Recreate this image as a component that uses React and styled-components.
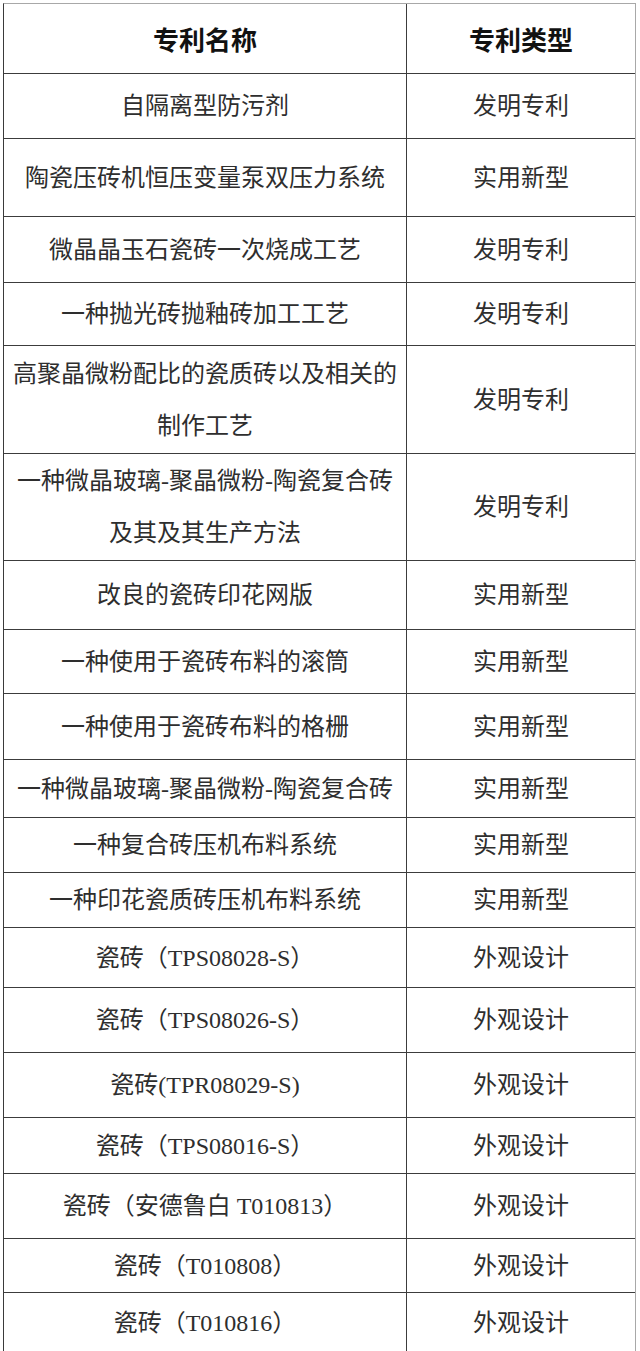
import React from "react";
import styled, { createGlobalStyle } from "styled-components";

const GlobalStyle = createGlobalStyle`
  html, body {
    margin: 0;
    padding: 0;
    background: #ffffff;
  }
  body {
    font-family: "Liberation Serif", "Noto Sans CJK SC", serif;
  }
`;

const Page = styled.div`
  padding: 3px 0 0 3px;
  width: 640px;
  box-sizing: border-box;
`;

const Table = styled.div`
  display: flex;
  flex-direction: column;
  width: 633px;
  box-sizing: border-box;
  border-top: 1px solid #a8a8a8;
  border-left: 1px solid #3a3a3a;
  border-right: 1px solid #a8a8a8;
`;

const Row = styled.div`
  display: grid;
  grid-template-columns: 403px 228px;
  height: ${(p) => p.$h}px;
  box-sizing: border-box;
  border-bottom: 1px solid #3c3c3c;
`;

const Cell = styled.div`
  display: flex;
  flex-direction: column;
  align-items: center;
  justify-content: center;
  text-align: center;
  box-sizing: border-box;
  border-right: ${(p) => (p.$divider ? "1px solid #3c3c3c" : "none")};
  font-family: ${(p) =>
    p.$head
      ? '"Noto Sans CJK SC", "Liberation Sans", sans-serif'
      : '"Liberation Serif", "Noto Sans CJK SC", serif'};
  font-size: ${(p) => (p.$head ? "26px" : "24px")};
  font-weight: ${(p) => (p.$head ? 700 : 400)};
  color: ${(p) => (p.$head ? "#111111" : "#2e2e2e")};
  line-height: 52px;
  white-space: nowrap;
`;

const Line = styled.span`
  display: block;
  height: 52px;
`;

const rows = [
  { h: 65, name: ["自隔离型防污剂"], type: "发明专利" },
  { h: 78, name: ["陶瓷压砖机恒压变量泵双压力系统"], type: "实用新型" },
  { h: 66, name: ["微晶晶玉石瓷砖一次烧成工艺"], type: "发明专利" },
  { h: 63, name: ["一种抛光砖抛釉砖加工工艺"], type: "发明专利" },
  { h: 108, name: ["高聚晶微粉配比的瓷质砖以及相关的", "制作工艺"], type: "发明专利" },
  { h: 107, name: ["一种微晶玻璃-聚晶微粉-陶瓷复合砖", "及其及其生产方法"], type: "发明专利" },
  { h: 69, name: ["改良的瓷砖印花网版"], type: "实用新型" },
  { h: 64, name: ["一种使用于瓷砖布料的滚筒"], type: "实用新型" },
  { h: 66, name: ["一种使用于瓷砖布料的格栅"], type: "实用新型" },
  { h: 58, name: ["一种微晶玻璃-聚晶微粉-陶瓷复合砖"], type: "实用新型" },
  { h: 55, name: ["一种复合砖压机布料系统"], type: "实用新型" },
  { h: 55, name: ["一种印花瓷质砖压机布料系统"], type: "实用新型" },
  { h: 60, name: ["瓷砖（TPS08028-S）"], type: "外观设计" },
  { h: 65, name: ["瓷砖（TPS08026-S）"], type: "外观设计" },
  { h: 65, name: ["瓷砖(TPR08029-S)"], type: "外观设计" },
  { h: 56, name: ["瓷砖（TPS08016-S）"], type: "外观设计" },
  { h: 65, name: ["瓷砖（安德鲁白 T010813）"], type: "外观设计" },
  { h: 54, name: ["瓷砖（T010808）"], type: "外观设计" },
  { h: 60, name: ["瓷砖（T010816）"], type: "外观设计" },
];

export default function App() {
  return (
    <>
      <GlobalStyle />
      <Page>
        <Table>
          <Row $h={70}>
            <Cell $head $divider>专利名称</Cell>
            <Cell $head>专利类型</Cell>
          </Row>
          {rows.map((r, i) => (
            <Row key={i} $h={r.h}>
              <Cell $divider>
                {r.name.length > 1
                  ? r.name.map((l, j) => <Line key={j}>{l}</Line>)
                  : r.name[0]}
              </Cell>
              <Cell>{r.type}</Cell>
            </Row>
          ))}
        </Table>
      </Page>
    </>
  );
}
